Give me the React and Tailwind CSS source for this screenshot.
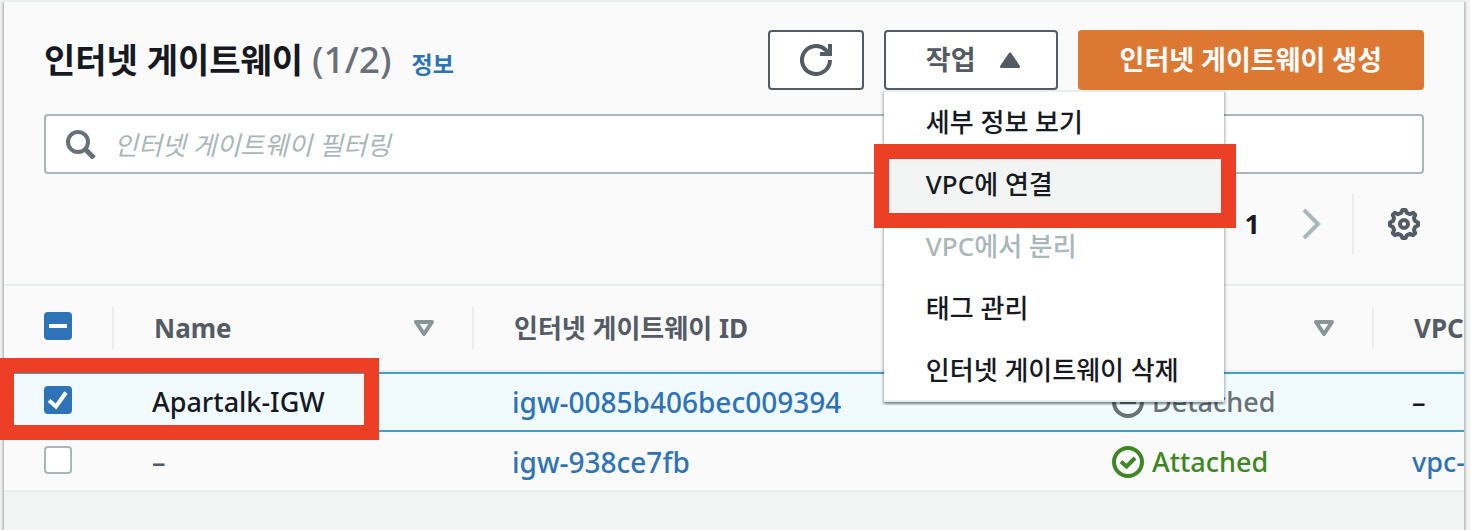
import React, { useEffect, useRef } from 'react';

const gateways = [
  { id: 'igw-0085b406bec009394', name: 'Apartalk-IGW', state: 'Detached', vpc: '–', selected: true },
  { id: 'igw-938ce7fb', name: '–', state: 'Attached', vpc: 'vpc-', selected: false },
];

const actions = [
  { label: '세부 정보 보기' },
  { label: 'VPC에 연결', active: true },
  { label: 'VPC에서 분리', disabled: true },
  { label: '태그 관리' },
  { label: '인터넷 게이트웨이 삭제' },
];

function Checkbox({ label, checked, mixed }) {
  const ref = useRef(null);
  useEffect(() => {
    if (ref.current) ref.current.indeterminate = Boolean(mixed);
  }, [mixed]);
  return (
    <span className="relative block size-7">
      <input
        ref={ref}
        type="checkbox"
        aria-label={label}
        defaultChecked={checked}
        className="peer block size-7 appearance-none rounded-[4px] border-2 border-[#aab7b8] bg-white checked:border-[#2e73b8] checked:bg-[#2e73b8] indeterminate:border-[#2e73b8] indeterminate:bg-[#2e73b8]"
      />
      <svg viewBox="0 0 28 28" fill="none" stroke="#fff" strokeWidth="4" className="pointer-events-none absolute inset-0 hidden size-7 peer-checked:block">
        <path d="M5 14.500l7 6L22 6.500" />
      </svg>
      <svg viewBox="0 0 28 28" fill="none" stroke="#fff" strokeWidth="4" className="pointer-events-none absolute inset-0 hidden size-7 peer-indeterminate:block">
        <path d="M5 14h18" />
      </svg>
    </span>
  );
}

function HeaderCell({ children, sortable }) {
  return (
    <th scope="col" className="border-y-2 border-[#eaeded] p-0 text-left font-bold">
      <div className="flex h-[42px] items-center justify-between border-r-2 border-[#eaeded] pr-[38px] pl-10 whitespace-nowrap">
        <span>{children}</span>
        {sortable && (
          <button type="button" aria-label="정렬">
            <svg viewBox="0 0 20 16" className="block h-4 w-5" fill="none" stroke="#879596" strokeWidth="4" strokeLinejoin="round">
              <path d="M2 2h16l-8 12z" />
            </svg>
          </button>
        )}
      </div>
    </th>
  );
}

function StateIcon({ state }) {
  return (
    <svg viewBox="0 0 32 32" className="size-8 shrink-0" fill="none" stroke="currentColor" strokeWidth="4">
      <circle cx="16" cy="16" r="14" />
      {state === 'Attached' ? <path d="M9 15.500l5.500 5L23 12" /> : <path d="M8 16h16" />}
    </svg>
  );
}

function ActionsMenu() {
  return (
    <div className="relative">
      <button
        type="button"
        aria-haspopup="menu"
        aria-expanded="true"
        className="flex h-15 items-center gap-6 rounded-[4px] border-2 border-[#545b64] bg-white pr-9 pl-10 font-bold text-[#545b64]"
      >
        작업
        <svg viewBox="0 0 20 16" className="h-4 w-5" fill="currentColor" stroke="currentColor" strokeWidth="3" strokeLinejoin="round">
          <path d="M10 2L18.500 14.500H1.500z" />
        </svg>
      </button>
      <ul
        role="menu"
        className="absolute top-full left-0 z-10 w-[340px] border-y-2 border-[#eaeded] bg-white text-[26px] shadow-[0_2px_2px_0_rgba(0,28,36,0.3),2px_2px_2px_0_rgba(0,28,36,0.15),-2px_2px_2px_0_rgba(0,28,36,0.15)]"
      >
        {actions.map((a) => (
          <li key={a.label} role="none" className="group relative">
            <button
              type="button"
              role="menuitem"
              disabled={a.disabled}
              className={
                'block h-[62px] w-full px-[42px] pb-0.5 text-left font-medium whitespace-nowrap group-last:h-15 group-last:pb-0 ' +
                (a.active ? 'bg-[#f2f3f3] text-[#16191f]' : a.disabled ? 'text-[#aab7b8]' : 'text-[#16191f]')
              }
            >
              {a.label}
            </button>
            {a.active && (
              <span className="pointer-events-none absolute -top-[10px] -right-3 -bottom-3 -left-[10px] border-[15px] border-[#ec3f26]" />
            )}
          </li>
        ))}
      </ul>
    </div>
  );
}

export default function App() {
  return (
    <div
      lang="ko"
      className="flex min-h-screen overflow-hidden bg-[#f2f3f3] pr-[6px] pl-1 font-['Noto_Sans','Noto_Sans_CJK_KR',sans-serif] text-[27px] leading-9 text-[#16191f]"
    >
      <main className="min-w-0 flex-1 border-t-2 border-[#eaeded] shadow-[0_2px_2px_0_rgba(0,28,36,0.3),2px_2px_2px_0_rgba(0,28,36,0.15),-2px_2px_2px_0_rgba(0,28,36,0.15)]">
        <header className="bg-[#fafafa] px-10 pt-7 pb-[30px]">
          <div className="flex items-center justify-between">
            <div className="flex items-baseline pt-0.5 whitespace-nowrap">
              <h1 className="text-[34px] font-bold">
                인터넷 게이트웨이 <span className="text-[37px] font-medium text-[#687078]">(1/2)</span>
              </h1>
              <a href="#info" className="ml-5 text-[23px] font-bold text-[#2e73b8]">정보</a>
            </div>
            <div className="flex gap-5 whitespace-nowrap">
              <button type="button" aria-label="새로 고침" className="flex h-15 w-24 items-center justify-center rounded-[4px] border-2 border-[#545b64] bg-white text-[#545b64]">
                <svg viewBox="0 0 32 32" className="size-8" fill="none" stroke="currentColor" strokeWidth="4">
                  <path d="M30 16a14 14 0 1 1-4.500-10.300L29 9.500" />
                  <path d="M30 0v10H20" />
                </svg>
              </button>
              <ActionsMenu />
              <button type="button" className="h-15 rounded-[4px] bg-[#dd7832] px-[42px] font-bold text-white">
                인터넷 게이트웨이 생성
              </button>
            </div>
          </div>
          <label className="mt-6 flex h-15 items-center rounded-[4px] border-2 border-[#aab7b8] bg-white px-5">
            <svg viewBox="0 0 30 30" className="size-[30px] shrink-0" fill="none" stroke="#687078" strokeWidth="4">
              <circle cx="12" cy="13" r="10" />
              <path d="M19 20l9 9" strokeWidth="5" />
            </svg>
            <input
              type="text"
              aria-label="인터넷 게이트웨이 필터링"
              placeholder="인터넷 게이트웨이 필터링"
              className="ml-[18px] min-w-0 flex-1 bg-transparent pt-0.5 text-[26px] outline-none placeholder:text-[#aab7b8] placeholder:italic"
            />
          </label>
          <div className="mt-5 flex h-15 items-center justify-end">
            <button type="button" aria-label="이전 페이지">
              <svg viewBox="0 0 20 32" className="h-8 w-5" fill="none" stroke="#aab7b8" strokeWidth="4">
                <path d="M18 2L4 16l14 14" />
              </svg>
            </button>
            <span className="mx-[42px] font-bold">1</span>
            <button type="button" aria-label="다음 페이지">
              <svg viewBox="0 0 20 32" className="h-8 w-5" fill="none" stroke="#aab7b8" strokeWidth="4">
                <path d="M2 2l14 14L2 30" />
              </svg>
            </button>
            <div className="ml-[30px] flex h-15 items-center border-l-2 border-[#eaeded] pr-1 pl-[34px]">
              <button type="button" aria-label="환경 설정">
                <svg viewBox="0 0 32 32" className="size-8" fill="none" stroke="#545b64" strokeWidth="4" strokeLinejoin="round">
                  <path d="M14.500 2h3l1.500 3 3 1.200 3.200-1.300 2 2L25.900 10l1.200 3 2.900 1.500v3L27.100 19l-1.200 3 1.300 3.100-2 2L22 25.800 19 27l-1.500 3h-3L13 27l-3-1.200-3.200 1.300-2-2L6.100 22l-1.200-3L2 17.500v-3L4.900 13l1.200-3-1.300-3.100 2-2L10 6.200 13 5z" />
                  <circle cx="16" cy="16" r="4" />
                </svg>
              </button>
            </div>
          </div>
        </header>
        <div className="relative">
          <div className="overflow-hidden">
            <table className="w-[1670px] table-fixed border-separate border-spacing-0 bg-[#fafafa]">
              <colgroup>
                <col className="w-[110px]" />
                <col className="w-[360px]" />
                <col className="w-[600px]" />
                <col className="w-[300px]" />
                <col className="w-[300px]" />
              </colgroup>
              <thead>
                <tr className="h-[88px] text-[26px] text-[#545b64]">
                  <th scope="col" className="border-y-2 border-[#eaeded] p-0">
                    <div className="flex h-[42px] items-center border-r-2 border-[#eaeded] pb-1 pl-10">
                      <Checkbox label="모두 선택" mixed />
                    </div>
                  </th>
                  <HeaderCell sortable>Name</HeaderCell>
                  <HeaderCell>인터넷 게이트웨이 ID</HeaderCell>
                  <HeaderCell sortable>상태</HeaderCell>
                  <HeaderCell>VPC ID</HeaderCell>
                </tr>
              </thead>
              <tbody className="font-medium">
                {gateways.map((g) => {
                  const cell = g.selected
                    ? 'border-y-2 border-[#449fc8] bg-[#f1faff] p-0 pl-[38px]'
                    : 'border-b-2 border-[#eaeded] p-0 pt-0.5 pl-[38px]';
                  return (
                    <tr key={g.id} className="h-15 whitespace-nowrap">
                      <td className={cell}>
                        <div className="pb-1 pl-0.5">
                          <Checkbox label={g.id} checked={g.selected} />
                        </div>
                      </td>
                      <td className={cell + (g.name === '–' ? ' text-[#545b64]' : '')}>{g.name}</td>
                      <td className={cell}>
                        <a href={'#' + g.id} className="text-[28px] text-[#2e73b8]">{g.id}</a>
                      </td>
                      <td className={cell}>
                        <span className={'flex items-center gap-2 ' + (g.state === 'Attached' ? 'text-[#3f8624]' : 'text-[#687078]')}>
                          <StateIcon state={g.state} />
                          {g.state}
                        </span>
                      </td>
                      <td className={cell}>
                        {g.vpc === '–' ? g.vpc : <a href="#vpc" className="text-[#2e73b8]">{g.vpc}</a>}
                      </td>
                    </tr>
                  );
                })}
              </tbody>
            </table>
          </div>
          <span className="pointer-events-none absolute top-[74px] -left-1 h-[82px] w-[379px] border-[15px] border-l-[14px] border-[#ec3f26]" />
        </div>
      </main>
    </div>
  );
}
